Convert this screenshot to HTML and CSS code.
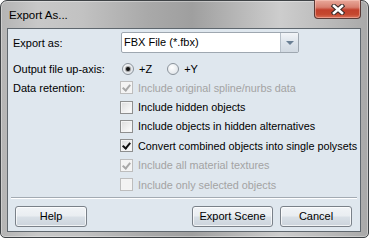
FILE: index.html
```html
<html>
<head>
<meta charset="UTF-8">
<title>Export As...</title>
<link rel="stylesheet" href="styles.css">
</head>
<body>
<div class="window">
	<div class="titlebar">
		<span class="title">Export As...</span>
		<div class="close">
			<svg width="14" height="11" viewBox="0 0 14 11">
				<path d="M3 2 L11 9 M11 2 L3 9" stroke="#3b2a28" stroke-width="4.6" stroke-linecap="square"/>
				<path d="M3 2 L11 9 M11 2 L3 9" stroke="#ffffff" stroke-width="2.6" stroke-linecap="square"/>
			</svg>
		</div>
	</div>
	<div class="client">
		<div class="form">
			<div class="lbl">Export as:</div>
			<div class="combo">
				<div class="comboText">FBX File (*.fbx)</div>
				<div class="comboBtn"><span class="arrow"></span></div>
			</div>

			<div class="lbl radioLbl">Output file up-axis:</div>
			<div class="radios">
				<div class="radio"><span class="dot on"></span>+Z</div>
				<div class="radio"><span class="dot"></span>+Y</div>
			</div>

			<div class="lbl checkLbl">Data retention:</div>
			<div class="checks">
				<div class="check disabled"><span class="box on"></span>Include original spline/nurbs data</div>
				<div class="check"><span class="box"></span>Include hidden objects</div>
				<div class="check"><span class="box"></span>Include objects in hidden alternatives</div>
				<div class="check"><span class="box on"></span>Convert combined objects into single polysets</div>
				<div class="check disabled"><span class="box on"></span>Include all material textures</div>
				<div class="check disabled"><span class="box"></span>Include only selected objects</div>
			</div>
		</div>
		<div class="sep"></div>
		<div class="buttons">
			<div class="btn">Help</div>
			<div class="spacer"></div>
			<div class="btn wide">Export Scene</div>
			<div class="btn">Cancel</div>
		</div>
	</div>
</div>
</body>
</html>
```
FILE: styles.css
```css
body{
	margin:0;
	width:370px;
	height:245px;
	overflow:hidden;
	background:#ffffff;
	font-family:"Liberation Sans", Arial, sans-serif;
	font-size:11px;
	color:#000000;
}

.window{
	width:369px;
	height:238px;
	box-sizing:border-box;
	border:1px solid #3f4346;
	border-radius:7px 7px 5px 5px;
	padding:0 7px 5px 6px;
	display:flex;
	flex-direction:column;
	background:linear-gradient(to right, #b4b4b4 0%, #c8c8c8 10%, #c2c2c2 22%, #a9a9a9 40%, #9f9f9f 52%, #b6b6b6 64%, #cdcdcd 76%, #bcbcbc 88%, #a9a9a9 100%);
	box-shadow:inset 0 0 0 1px rgba(255,255,255,0.35);
}

.titlebar{
	height:27px;
	display:flex;
	align-items:flex-start;
}

.title{
	font-size:11.5px;
	margin:8px 0 0 2px;
	color:#000000;
}

.close{
	margin:-1px 0 0 auto;
	width:47px;
	height:19px;
	box-sizing:border-box;
	border:1px solid #5a3a36;
	border-top:none;
	border-radius:0 0 4px 4px;
	background:linear-gradient(to bottom, #e9a99b 0%, #d88070 40%, #c2402c 55%, #c5482f 80%, #d9715a 100%);
	box-shadow:inset 0 0 0 1px rgba(255,210,200,0.45);
	display:flex;
	align-items:center;
	justify-content:center;
}

.client{
	height:204px;
	box-sizing:border-box;
	border:1px solid #5f676e;
	background:#dfe7ee;
	display:flex;
	flex-direction:column;
}

.form{
	display:grid;
	grid-template-columns:108px 1fr;
	padding:3px 0 0 5px;
	white-space:nowrap;
}

.lbl{
	display:flex;
	align-items:center;
}

.combo{
	width:178px;
	height:21px;
	box-sizing:border-box;
	border:1px solid #9ea7b0;
	border-radius:2px;
	background:#ffffff;
	display:flex;
}

.comboText{
	flex:1;
	padding-left:2px;
	line-height:19px;
}

.comboBtn{
	width:17px;
	border-left:1px solid #b7c0c9;
	background:linear-gradient(to bottom, #f2f5f8, #dde4eb 50%, #d2dae2);
	display:flex;
	align-items:center;
	justify-content:center;
}

.arrow{
	width:0;
	height:0;
	border-left:4px solid transparent;
	border-right:4px solid transparent;
	border-top:4px solid #6a7f93;
}

.radioLbl{
	margin-top:6px;
	height:19px;
}

.radios{
	margin-top:6px;
	height:19px;
	display:flex;
	align-items:center;
	padding-left:1px;
}

.radio{
	display:flex;
	align-items:center;
	gap:5px;
	margin-right:15px;
}

.dot{
	width:12px;
	height:12px;
	box-sizing:border-box;
	border:1px solid #8b939b;
	border-radius:50%;
	background:radial-gradient(circle at 40% 35%, #ffffff, #e4e8ec 70%, #d0d6dc);
	display:flex;
	align-items:center;
	justify-content:center;
}

.dot.on::after{
	content:"";
	width:4px;
	height:4px;
	border-radius:50%;
	background:#111111;
	box-shadow:0 0 1px 1px rgba(60,60,60,0.5);
}

.checkLbl{
	align-self:start;
	height:19.4px;
}

.checks{
	display:flex;
	flex-direction:column;
	margin-left:-1px;
	min-width:0;
}

.check{
	height:19.4px;
	display:flex;
	align-items:center;
	gap:5px;
	font-size:10.8px;
}

.check.disabled{
	color:#a3a3a3;
}

.box{
	flex:none;
	width:13px;
	height:13px;
	box-sizing:border-box;
	border:1px solid #8e8f8f;
	background:linear-gradient(135deg, #dcdcdc, #ffffff);
	box-shadow:inset 0 0 0 1px #f4f4f4;
	position:relative;
}

.disabled .box{
	border-color:#bdbdbd;
	background:#f3f3f3;
}

.box.on::after{
	content:"";
	position:absolute;
	left:3px;
	top:1px;
	width:3px;
	height:6px;
	border-right:2px solid #101010;
	border-bottom:2px solid #101010;
	transform:rotate(40deg);
}

.disabled .box.on::after{
	border-color:#a8a8a8;
}

.sep{
	margin:2.6px 3px 0 3px;
	height:1px;
	background:#a3abb3;
	border-bottom:1px solid #ffffff;
}

.buttons{
	margin-top:7px;
	padding:0 8px 0 7px;
	display:flex;
	gap:7px;
}

.spacer{
	flex:1;
}

.btn{
	width:72px;
	height:21px;
	box-sizing:border-box;
	border:1px solid #7a8189;
	border-radius:3px;
	background:linear-gradient(to bottom, #f1f4f7 0%, #e9edf1 48%, #d9e0e7 52%, #ccd4dc 100%);
	box-shadow:inset 0 0 0 1px rgba(255,255,255,0.7);
	display:flex;
	align-items:center;
	justify-content:center;
}

.btn.wide{
	width:81px;
}
```
